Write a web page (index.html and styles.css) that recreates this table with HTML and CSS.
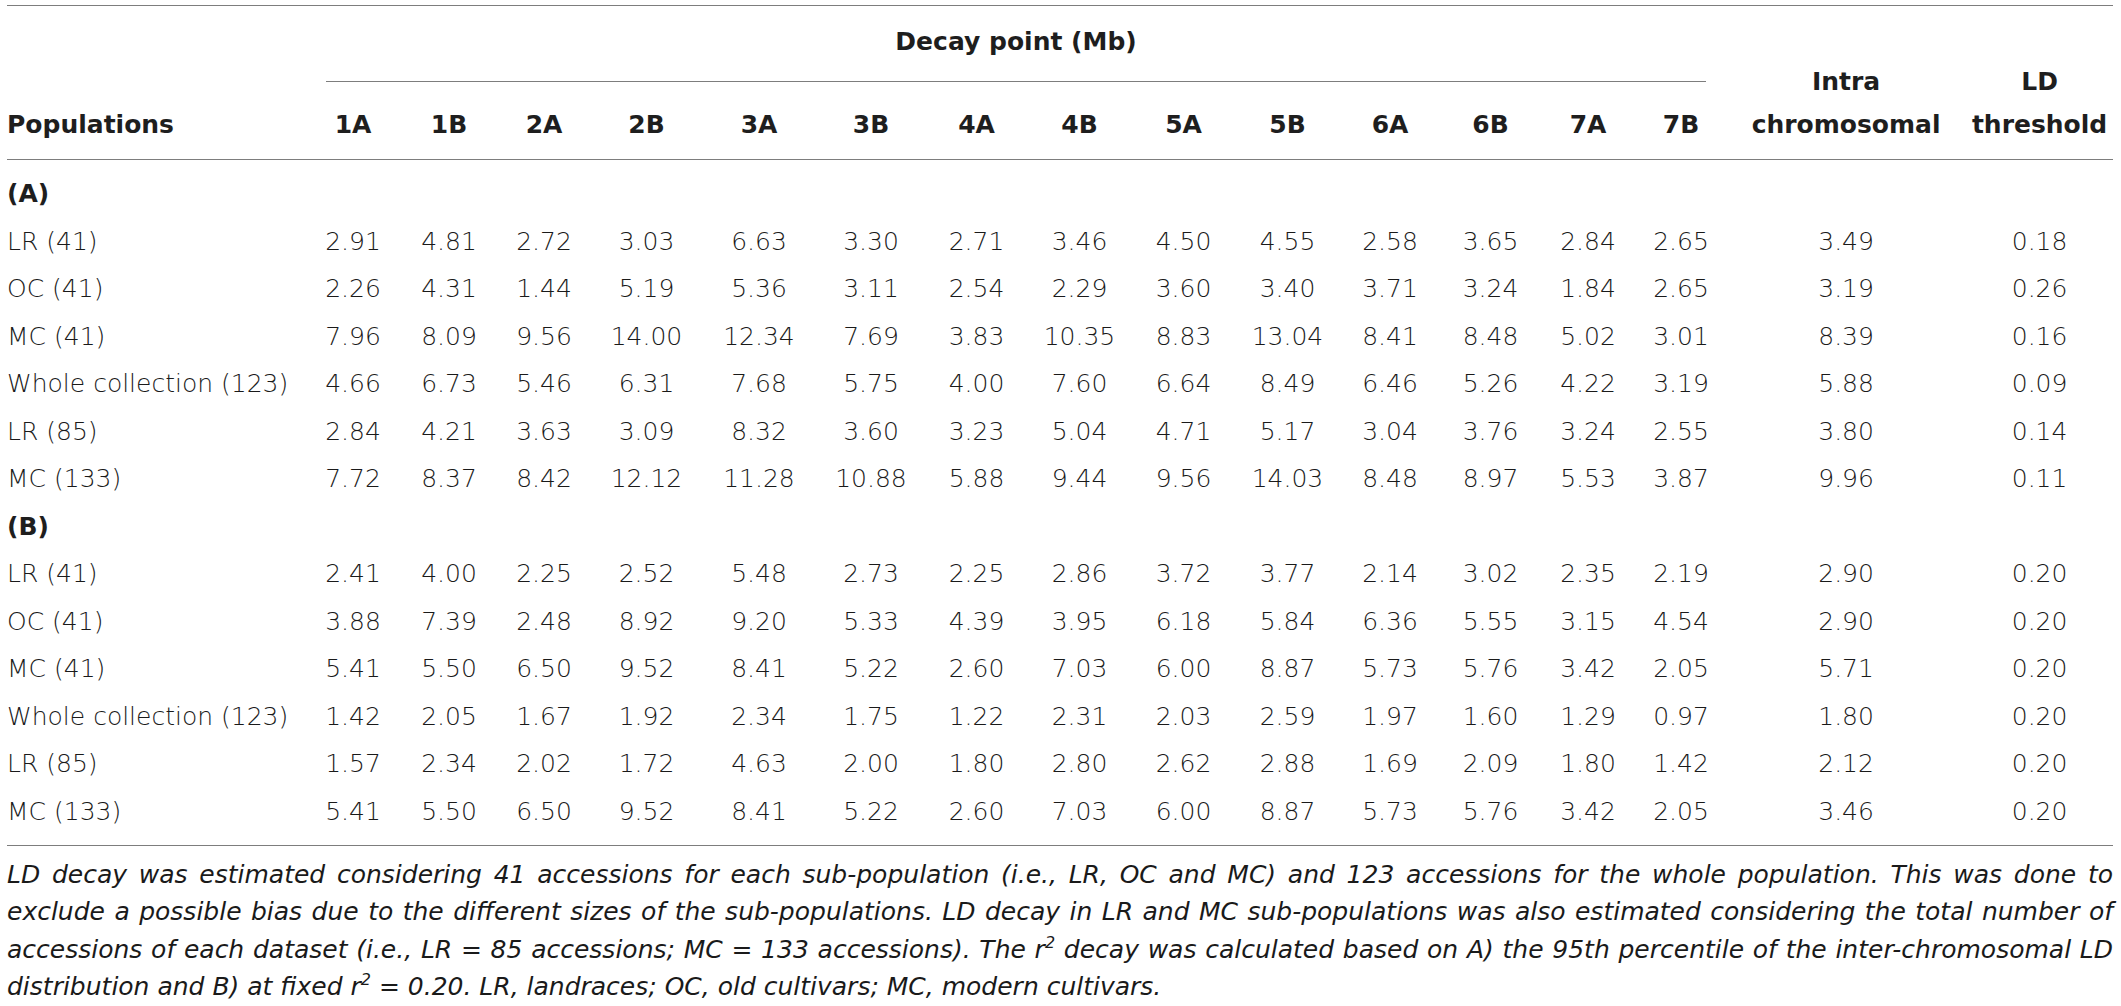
FILE: index.html
```html
<!DOCTYPE html>
<html lang="en">
<head>
<meta charset="utf-8">
<title>LD decay table</title>
<link rel="stylesheet" href="styles.css">
</head>
<body>
<table class="ld-table">
  <colgroup>
    <col class="w-pop">
    <col class="w-98"><col class="w-94"><col class="w-96"><col class="w-109">
    <col class="w-116"><col class="w-108"><col class="w-103"><col class="w-103">
    <col class="w-105"><col class="w-103"><col class="w-102"><col class="w-99">
    <col class="w-96"><col class="w-90">
    <col class="w-intra"><col class="w-ld">
  </colgroup>
  <thead>
    <tr>
      <th class="h-pop" rowspan="2">Populations</th>
      <th class="h-decay" colspan="14"><div class="decay-label">Decay point (Mb)</div></th>
      <th class="h-span" rowspan="2">Intra<br>chromosomal</th>
      <th class="h-span" rowspan="2">LD<br>threshold</th>
    </tr>
    <tr class="chrom-row">
      <th>1A</th><th>1B</th><th>2A</th><th>2B</th><th>3A</th><th>3B</th><th>4A</th>
      <th>4B</th><th>5A</th><th>5B</th><th>6A</th><th>6B</th><th>7A</th><th>7B</th>
    </tr>
  </thead>
  <tbody>
    <tr class="section first"><td colspan="17">(A)</td></tr>
    <tr><td>LR (41)</td><td>2.91</td><td>4.81</td><td>2.72</td><td>3.03</td><td>6.63</td><td>3.30</td><td>2.71</td><td>3.46</td><td>4.50</td><td>4.55</td><td>2.58</td><td>3.65</td><td>2.84</td><td>2.65</td><td>3.49</td><td>0.18</td></tr>
    <tr><td>OC (41)</td><td>2.26</td><td>4.31</td><td>1.44</td><td>5.19</td><td>5.36</td><td>3.11</td><td>2.54</td><td>2.29</td><td>3.60</td><td>3.40</td><td>3.71</td><td>3.24</td><td>1.84</td><td>2.65</td><td>3.19</td><td>0.26</td></tr>
    <tr><td>MC (41)</td><td>7.96</td><td>8.09</td><td>9.56</td><td>14.00</td><td>12.34</td><td>7.69</td><td>3.83</td><td>10.35</td><td>8.83</td><td>13.04</td><td>8.41</td><td>8.48</td><td>5.02</td><td>3.01</td><td>8.39</td><td>0.16</td></tr>
    <tr><td>Whole collection (123)</td><td>4.66</td><td>6.73</td><td>5.46</td><td>6.31</td><td>7.68</td><td>5.75</td><td>4.00</td><td>7.60</td><td>6.64</td><td>8.49</td><td>6.46</td><td>5.26</td><td>4.22</td><td>3.19</td><td>5.88</td><td>0.09</td></tr>
    <tr><td>LR (85)</td><td>2.84</td><td>4.21</td><td>3.63</td><td>3.09</td><td>8.32</td><td>3.60</td><td>3.23</td><td>5.04</td><td>4.71</td><td>5.17</td><td>3.04</td><td>3.76</td><td>3.24</td><td>2.55</td><td>3.80</td><td>0.14</td></tr>
    <tr><td>MC (133)</td><td>7.72</td><td>8.37</td><td>8.42</td><td>12.12</td><td>11.28</td><td>10.88</td><td>5.88</td><td>9.44</td><td>9.56</td><td>14.03</td><td>8.48</td><td>8.97</td><td>5.53</td><td>3.87</td><td>9.96</td><td>0.11</td></tr>
    <tr class="section"><td colspan="17">(B)</td></tr>
    <tr><td>LR (41)</td><td>2.41</td><td>4.00</td><td>2.25</td><td>2.52</td><td>5.48</td><td>2.73</td><td>2.25</td><td>2.86</td><td>3.72</td><td>3.77</td><td>2.14</td><td>3.02</td><td>2.35</td><td>2.19</td><td>2.90</td><td>0.20</td></tr>
    <tr><td>OC (41)</td><td>3.88</td><td>7.39</td><td>2.48</td><td>8.92</td><td>9.20</td><td>5.33</td><td>4.39</td><td>3.95</td><td>6.18</td><td>5.84</td><td>6.36</td><td>5.55</td><td>3.15</td><td>4.54</td><td>2.90</td><td>0.20</td></tr>
    <tr><td>MC (41)</td><td>5.41</td><td>5.50</td><td>6.50</td><td>9.52</td><td>8.41</td><td>5.22</td><td>2.60</td><td>7.03</td><td>6.00</td><td>8.87</td><td>5.73</td><td>5.76</td><td>3.42</td><td>2.05</td><td>5.71</td><td>0.20</td></tr>
    <tr><td>Whole collection (123)</td><td>1.42</td><td>2.05</td><td>1.67</td><td>1.92</td><td>2.34</td><td>1.75</td><td>1.22</td><td>2.31</td><td>2.03</td><td>2.59</td><td>1.97</td><td>1.60</td><td>1.29</td><td>0.97</td><td>1.80</td><td>0.20</td></tr>
    <tr><td>LR (85)</td><td>1.57</td><td>2.34</td><td>2.02</td><td>1.72</td><td>4.63</td><td>2.00</td><td>1.80</td><td>2.80</td><td>2.62</td><td>2.88</td><td>1.69</td><td>2.09</td><td>1.80</td><td>1.42</td><td>2.12</td><td>0.20</td></tr>
    <tr class="last"><td>MC (133)</td><td>5.41</td><td>5.50</td><td>6.50</td><td>9.52</td><td>8.41</td><td>5.22</td><td>2.60</td><td>7.03</td><td>6.00</td><td>8.87</td><td>5.73</td><td>5.76</td><td>3.42</td><td>2.05</td><td>3.46</td><td>0.20</td></tr>
  </tbody>
</table>
<div class="caption">
  <p class="cap-line">LD decay was estimated considering 41 accessions for each sub-population (i.e., LR, OC and MC) and 123 accessions for the whole population. This was done to</p>
  <p class="cap-line">exclude a possible bias due to the different sizes of the sub-populations. LD decay in LR and MC sub-populations was also estimated considering the total number of</p>
  <p class="cap-line">accessions of each dataset (i.e., LR = 85 accessions; MC = 133 accessions). The r<sup>2</sup> decay was calculated based on A) the 95th percentile of the inter-chromosomal LD</p>
  <p class="cap-line cap-last">distribution and B) at fixed r<sup>2</sup> = 0.20. LR, landraces; OC, old cultivars; MC, modern cultivars.</p>
</div>
</body>
</html>
```

FILE: styles.css
```css
html, body {
  margin: 0;
  background: #ffffff;
}

body {
  padding: 5px 8px 0 7px;
  font-family: "DejaVu Sans", "Liberation Sans", sans-serif;
  font-size: 25px;
  color: #1a1a1a;
}

.ld-table {
  width: 2106px;
  table-layout: fixed;
  border-collapse: collapse;
  border-top: 1px solid #7d7d7d;
}

.ld-table thead {
  border-bottom: 1px solid #7d7d7d;
}

.ld-table tbody {
  border-bottom: 1px solid #7d7d7d;
}

.w-pop { width: 297px; }
.w-90 { width: 90px; }
.w-94 { width: 94px; }
.w-96 { width: 96px; }
.w-98 { width: 98px; }
.w-99 { width: 99px; }
.w-102 { width: 102px; }
.w-103 { width: 103px; }
.w-105 { width: 105px; }
.w-108 { width: 108px; }
.w-109 { width: 109px; }
.w-116 { width: 116px; }
.w-intra { width: 240px; }
.w-ld { width: 147px; }

.ld-table th {
  font-weight: 700;
  color: #1e1e1e;
  text-align: center;
  white-space: nowrap;
  padding: 0;
}

.ld-table th.h-pop {
  text-align: left;
  vertical-align: bottom;
  line-height: 43px;
  padding-bottom: 13px;
}

.ld-table th.h-decay {
  vertical-align: top;
  padding: 0 20px 0 22px;
}

.decay-label {
  padding: 18px 0 21px;
  line-height: 36px;
  border-bottom: 1px solid #7d7d7d;
}

.ld-table th.h-span {
  vertical-align: bottom;
  line-height: 43px;
  padding-bottom: 13px;
}

.ld-table .chrom-row th {
  line-height: 43px;
  vertical-align: bottom;
  padding: 21px 0 13px;
}

.ld-table td {
  padding: 0;
  line-height: 47.5px;
  text-align: center;
  white-space: nowrap;
  font-weight: 300;
}

.ld-table td:first-child {
  text-align: left;
}

.ld-table .section td {
  font-weight: 700;
  color: #1e1e1e;
}

.ld-table .section.first td {
  padding-top: 10px;
}

.ld-table .last td {
  padding-bottom: 10px;
}

.caption {
  margin-top: 10px;
  width: 2106px;
  font-style: italic;
  font-weight: 300;
}

.cap-line {
  margin: 0;
  line-height: 37.3px;
  white-space: nowrap;
  text-align: justify;
  text-align-last: justify;
}

.cap-line.cap-last {
  text-align-last: left;
}

sup {
  font-size: 16px;
  line-height: 0;
  vertical-align: 10px;
}
```
